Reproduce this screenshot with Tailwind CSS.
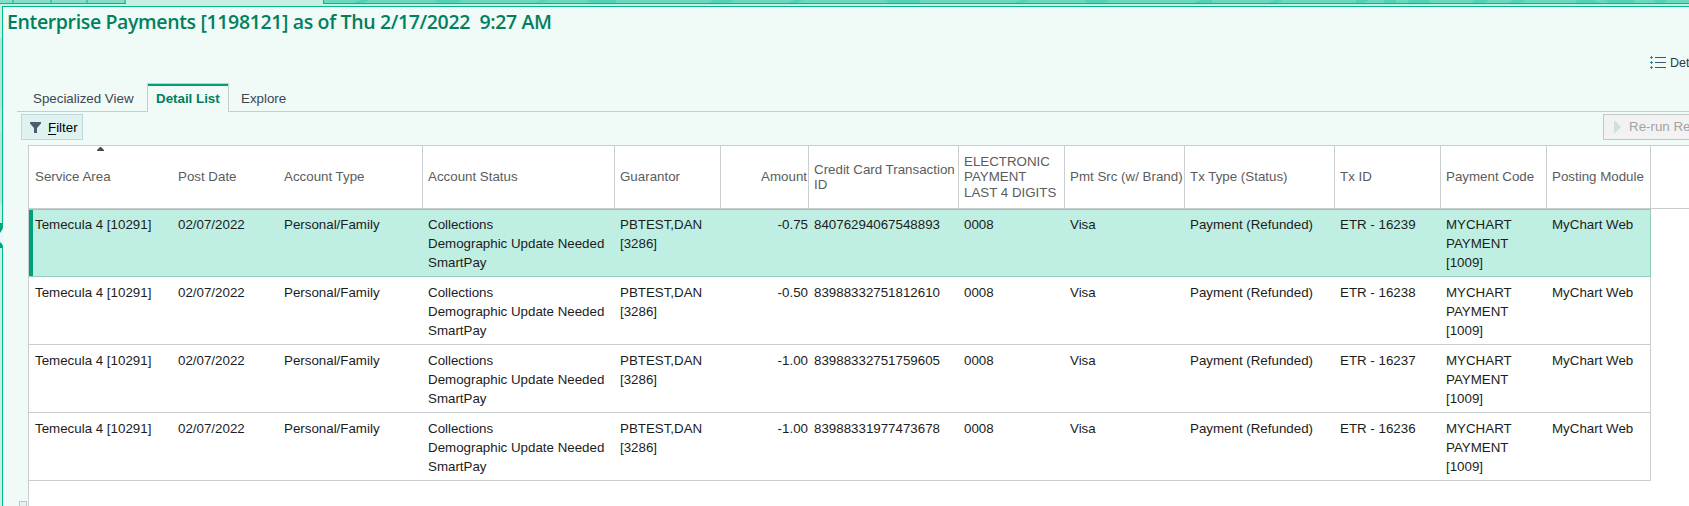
<!DOCTYPE html>
<html lang="en">
<head>
<meta charset="utf-8">
<title>Enterprise Payments</title>
<script src="https://cdn.jsdelivr.net/npm/@tailwindcss/browser@4"></script>
</head>
<body class="relative flex h-[506px] w-[1689px] flex-col overflow-hidden bg-[#c9efe4] font-['Liberation_Sans',Arial,sans-serif] text-[13.33px] text-[#1c1c1c]">

<!-- Workspace tab strip -->
<div class="flex h-1 shrink-0">
  <div class="flex h-1 w-[126px] border-b border-[#00bb88] bg-[#84dfca]">
    <div class="w-[14px] border-r-2 border-[#46cda8]"></div>
    <div class="w-[38px] border-r-2 border-[#46cda8]"></div>
    <div class="w-[36px] border-r-2 border-[#46cda8]"></div>
    <div class="w-[38px] border-r-2 border-[#46cda8]"></div>
  </div>
  <div class="w-[197px]"></div>
  <div class="h-1 flex-1 border-b border-l border-[#00bb88] bg-[#6adabf]">
    <svg class="block h-[3px] w-full" viewBox="0 0 1365 3" preserveAspectRatio="none" fill="#52d3b4">
      <path d="M30 3l6-3h9l-5 3zM110 0h28l-4 3h-20zM210 3l8-3h6l-8 3zM262 0h30v3h-26zM385 3l5-3h20l-4 3zM470 0h9l-6 3h-9zM560 0h36v3h-30zM690 3l8-3h8l-8 3zM760 0h26l-5 3h-18zM870 3l6-3h12v3zM950 0h9l-5 3h-9zM1032 0h13l-5 3h-8zM1060 0h12v3h-12zM1086 0h18l3 3h-25zM1150 0h15l-4 3h-13zM1184 3l6-3h12l-6 3zM1250 3l4-3h16l6 3zM1280 0h30v3h-24zM1330 0h14l-4 3h-8z"/>
    </svg>
  </div>
</div>
<div class="h-0.5 shrink-0"></div>

<div class="flex min-h-0 flex-1">
  <!-- Sliver of the collapsed side bar -->
  <div class="flex w-0.5 shrink-0 flex-col">
    <div class="h-8"></div>
    <div class="h-[72px] bg-[#b2e7d9]"></div>
    <div class="h-[21px] bg-[#bcecdf]"></div>
    <div class="h-[73px] bg-[#b2e7d9]"></div>
    <div class="h-[19px]"></div>
    <div class="h-[25px] bg-[#00a176]"></div>
  </div>

  <main class="flex min-w-0 flex-1 flex-col border-l border-t border-[#00bb88] bg-[#f0faf7]">
    <h1 class="ml-[4px] h-[31px] shrink-0 whitespace-pre font-['Open_Sans','Noto_Sans',sans-serif] text-[19.5px]/[29px] font-semibold tracking-[-0.36px] text-[#00805e]">Enterprise Payments [1198121] as of Thu 2/17/2022  9:27 AM</h1>

    <div class="mt-[14px] flex h-[22px] shrink-0 items-center justify-end">
      <div class="flex w-[39px] items-center gap-[3px] overflow-hidden">
        <svg class="h-[14px] w-[17px] shrink-0" viewBox="0 0 17 14">
          <path d="M0 1.500h3M1.500 0v3M0 6.500h3M1.500 5v3M0 11.500h3M1.500 10v3" stroke="#3584ab"/>
          <path d="M5 1.500h11M5 6.500h11M5 11.500h11" stroke="#41566e"/>
        </svg>
        <span class="text-[12.5px] text-[#2b3a4a]">Details</span>
      </div>
    </div>

    <!-- View tabs -->
    <div class="mt-[9px] flex h-[29px] shrink-0 text-[#3d4750]">
      <div class="w-[14px]"></div>
      <div class="w-[130px] border-b border-[#c9cccc] pl-4 pt-[1px] text-[13.33px]/[29px]">Specialized View</div>
      <div class="w-[82px] border-x border-t border-[#c9cccc]"><div class="h-full border-t-2 border-[#00a176] pl-2 text-[13.33px]/[26px] font-bold text-[#00805e]">Detail List</div></div>
      <div class="flex-1 border-b border-[#c9cccc] pl-3 pt-[1px] text-[13.33px]/[29px]">Explore</div>
    </div>

    <!-- Toolbar -->
    <div class="flex h-[33px] shrink-0 items-start justify-between pl-[18px] pt-[2px]">
      <button class="flex h-[26px] w-[62px] items-center border border-[#bdd8dc] bg-[#dff2ef] pl-2 text-black">
        <svg class="mr-[7px] h-[11px] w-[11px]" viewBox="0 0 11 11" fill="#4a5d73"><path d="M0 0h11v1.500L7 6v5H4V6L0 1.500z"/></svg>
        <span class="pt-px"><span class="underline underline-offset-2">F</span>ilter</span>
      </button>
      <button class="flex h-[26px] w-[86px] items-center overflow-hidden border border-r-0 border-[#c3c6c6] bg-[#f2f2f2] pl-[10px] text-[#a3a3a3]">
        <svg class="mr-2 h-3 w-[7px] shrink-0" viewBox="0 0 7 12" fill="#cfe0da"><path d="M0 0h1l6 6-6 6H0z"/></svg>
        <span class="whitespace-nowrap">Re-run Report</span>
      </button>
    </div>

    <!-- Payments grid -->
    <div class="ml-[25px] min-h-0 flex-1 border-l border-t border-[#c9cccc] bg-white">
      <div id="head" class="flex h-[63px] items-center border-b border-[#c9cccc] leading-[15.5px] text-[#5c5c5c]"></div>
      <div id="rows"></div>
    </div>
  </main>
</div>

<!-- Sort arrow on Service Area -->
<svg class="absolute left-[97px] top-[147px] h-1 w-[7px]" viewBox="0 0 7 4" fill="#4a4a4a"><path d="M3 0h1l3 3v1H0V3z"/></svg>
<!-- Side bar handle -->
<svg class="absolute left-0 top-[224px] h-[25px] w-[3px]" viewBox="0 0 3 25"><path d="M3 4v18L2 20 0 18V9l2-3z" fill="#eaf5fc"/></svg>
<!-- Splitter corner -->
<div class="absolute left-[19px] top-[501px] h-[8px] w-[8px] border border-[#bfc6c8] bg-[#e9eff1]"></div>

<script>
const cols = [
  ["Service Area", "w-[143px] pl-1.5"],
  ["Post Date", "w-[106px] pl-1.5"],
  ["Account Type", "w-[145px] pl-1.5", true],
  ["Account Status", "w-[192px] pl-[5px]", true],
  ["Guarantor", "w-[106px] pl-[5px]", true],
  ["Amount", "w-[88px] pr-[1px] text-right", true],
  ["Credit Card Transaction<br>ID", "w-[150px] pl-[5px]", true],
  ["ELECTRONIC<br>PAYMENT<br>LAST 4 DIGITS", "w-[106px] pl-[5px]", true],
  ["Pmt Src (w/ Brand)", "w-[120px] pl-[5px]", true],
  ["Tx Type (Status)", "w-[150px] pl-[5px]", true],
  ["Tx ID", "w-[106px] pl-[5px]", true],
  ["Payment Code", "w-[106px] pl-[5px]", true],
  ["Posting Module", "w-[104px] pl-[5px]", true]
];
const data = [
  ["-0.75", "84076294067548893", "16239"],
  ["-0.50", "83988332751812610", "16238"],
  ["-1.00", "83988332751759605", "16237"],
  ["-1.00", "83988331977473678", "16236"]
];
document.getElementById("head").innerHTML = cols.map(([t, c, line]) =>
  `<div class="${c} flex h-full shrink-0 items-center whitespace-nowrap ${line ? "border-r border-[#c9cfd1]" : ""}"><span class="flex-1">${t}</span></div>`).join("");
document.getElementById("rows").innerHTML = data.map(([amt, id, tx], i) => {
  const cells = ["Temecula 4 [10291]", "02/07/2022", "Personal/Family", "Collections<br>Demographic Update Needed<br>SmartPay",
    "PBTEST,DAN<br>[3286]", amt, id, "0008", "Visa", "Payment (Refunded)", "ETR - " + tx, "MYCHART<br>PAYMENT<br>[1009]", "MyChart Web"];
  const state = i === 0
    ? "h-[68px] border-y border-r border-[#8fccba] bg-[#bfeee2] bg-linear-to-r from-[#00a176] from-[4px] to-[#bfeee2] to-[4px] pt-[5px]"
    : "h-[68px] border-b border-r border-[#c9cfd1] pt-[6px]";
  return `<div class="flex w-[1622px] ${state} leading-[19px]">` +
    cells.map((v, k) => `<div class="${cols[k][1]} shrink-0 whitespace-nowrap">${v}</div>`).join("") + `</div>`;
}).join("");
</script>
</body>
</html>
